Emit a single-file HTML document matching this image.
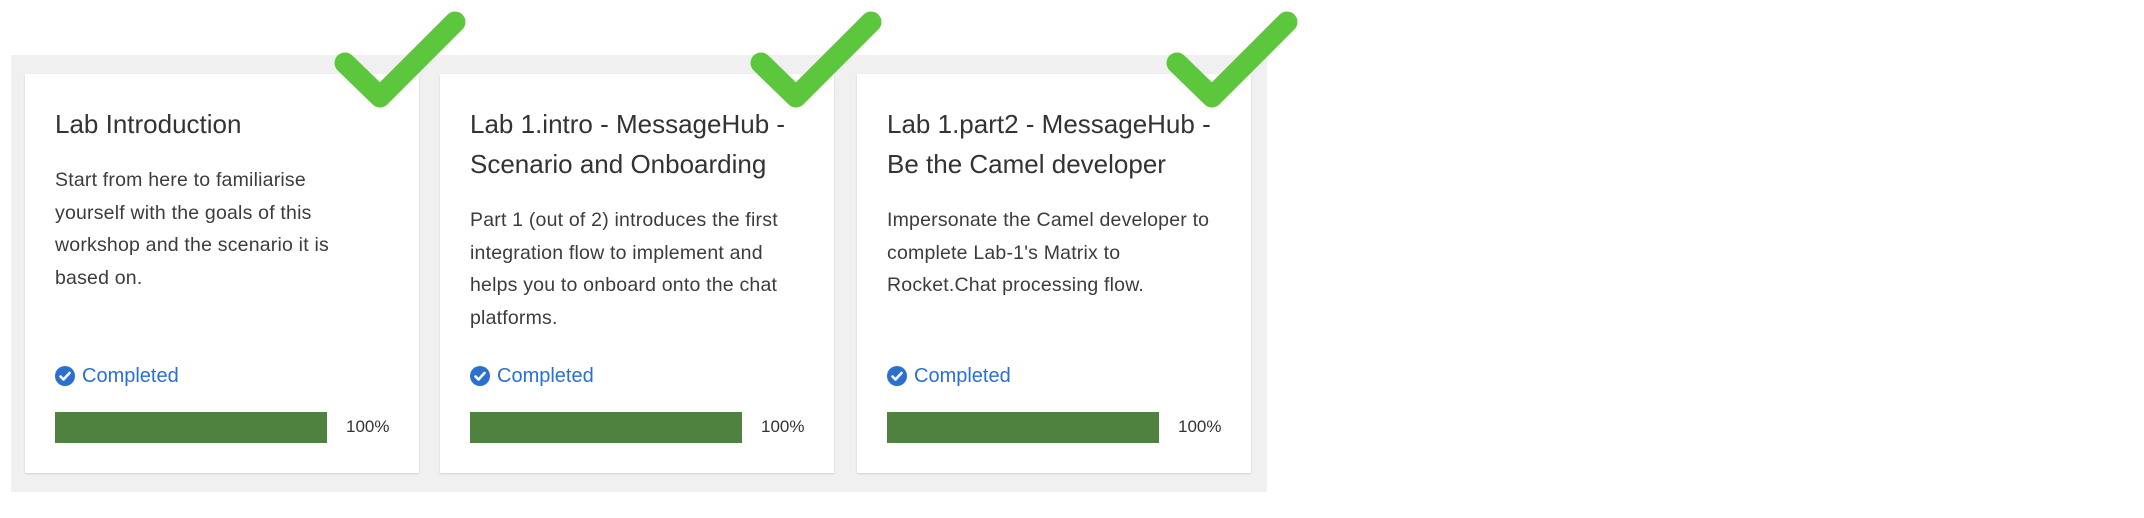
<!DOCTYPE html>
<html><head><meta charset="utf-8"><style>
body{margin:0;width:2144px;height:518px;background:#fff;position:relative;overflow:hidden;font-family:"Liberation Sans",sans-serif}
.panel{position:absolute;left:11px;top:55px;width:1256px;height:437px;background:#f0f0f0}
.card{position:absolute;top:74px;width:394px;height:399px;background:#fff;box-shadow:0 1px 2px rgba(0,0,0,.12)}
.t{position:absolute;left:30px;top:30px;width:360px;font-size:26px;line-height:40px;color:#333;white-space:nowrap}
.d{position:absolute;left:30px;width:360px;font-size:19.5px;line-height:32.5px;color:#3c3c3c;white-space:nowrap;letter-spacing:0.2px}
.c{position:absolute;left:30px;top:290px;font-size:20px;color:#2b6fd1;line-height:24px}
.c svg{position:absolute;left:0;top:2px}
.c span{position:absolute;left:27px;top:0;white-space:nowrap}
.bar{position:absolute;left:30px;top:338px;width:272px;height:31px;background:#4f823f}
.p{position:absolute;left:321px;top:343px;font-size:17px;color:#333}
svg.chk{position:absolute;left:0;top:0}
</style></head><body>
<div class="panel"></div>
<div class="card" style="left:25px">
<div class="t">Lab Introduction</div>
<div class="d" style="top:90px">Start from here to familiarise<br>yourself with the goals of this<br>workshop and the scenario it is<br>based on.</div>
<div class="c"><svg width="20" height="20" viewBox="0 0 20 20"><circle cx="10" cy="10" r="10" fill="#2b6fd1"/><path d="M5.5 10.5l3 3 6-6.5" stroke="#fff" stroke-width="2.6" fill="none" stroke-linecap="round" stroke-linejoin="round"/></svg><span>Completed</span></div>
<div class="bar"></div><div class="p">100%</div>
</div>
<div class="card" style="left:440px">
<div class="t">Lab 1.intro - MessageHub -<br>Scenario and Onboarding</div>
<div class="d" style="top:130px">Part 1 (out of 2) introduces the first<br>integration flow to implement and<br>helps you to onboard onto the chat<br>platforms.</div>
<div class="c"><svg width="20" height="20" viewBox="0 0 20 20"><circle cx="10" cy="10" r="10" fill="#2b6fd1"/><path d="M5.5 10.5l3 3 6-6.5" stroke="#fff" stroke-width="2.6" fill="none" stroke-linecap="round" stroke-linejoin="round"/></svg><span>Completed</span></div>
<div class="bar"></div><div class="p">100%</div>
</div>
<div class="card" style="left:857px">
<div class="t">Lab 1.part2 - MessageHub -<br>Be the Camel developer</div>
<div class="d" style="top:130px">Impersonate the Camel developer to<br>complete Lab-1's Matrix to<br>Rocket.Chat processing flow.</div>
<div class="c"><svg width="20" height="20" viewBox="0 0 20 20"><circle cx="10" cy="10" r="10" fill="#2b6fd1"/><path d="M5.5 10.5l3 3 6-6.5" stroke="#fff" stroke-width="2.6" fill="none" stroke-linecap="round" stroke-linejoin="round"/></svg><span>Completed</span></div>
<div class="bar"></div><div class="p">100%</div>
</div>
<svg class="chk" width="2144" height="518">
<g stroke="#5cc63c" stroke-width="21" fill="none" stroke-linecap="round" stroke-linejoin="round">
<path d="M345 63L380 97L455 22"/>
<path d="M761 63L796 97L871 22"/>
<path d="M1177 63L1212 97L1287 22"/>
</g></svg>
</body></html>
